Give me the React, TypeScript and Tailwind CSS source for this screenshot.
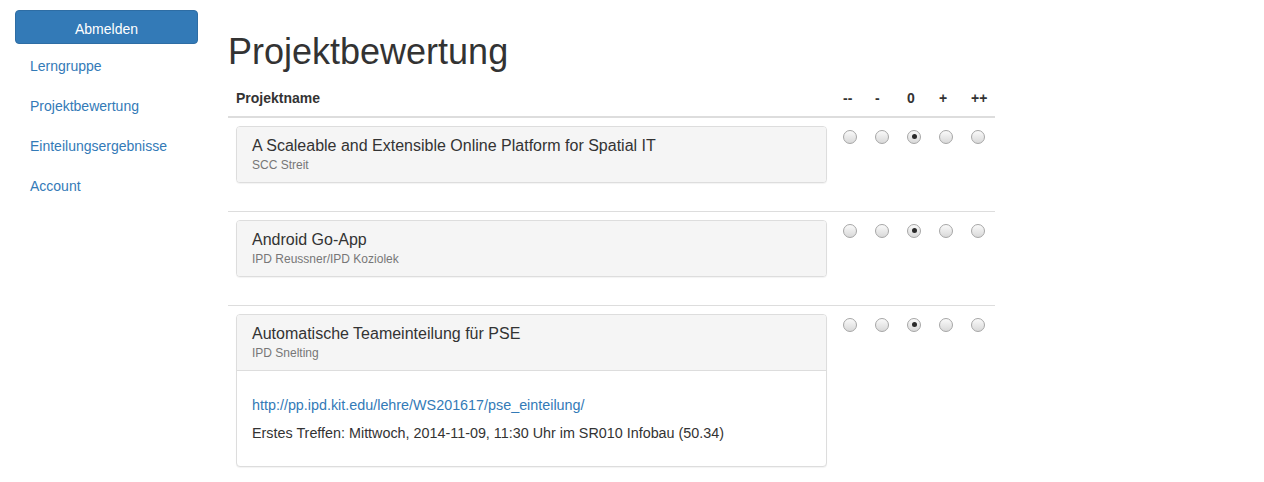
const projects = [
  {
    id: 1,
    title: 'A Scaleable and Extensible Online Platform for Spatial IT',
    supervisor: 'SCC Streit',
    details: null as null | { link: string; text: string },
  },
  {
    id: 2,
    title: 'Android Go-App',
    supervisor: 'IPD Reussner/IPD Koziolek',
    details: null as null | { link: string; text: string },
  },
  {
    id: 3,
    title: 'Automatische Teameinteilung für PSE',
    supervisor: 'IPD Snelting',
    details: {
      link: 'http://pp.ipd.kit.edu/lehre/WS201617/pse_einteilung/',
      text: 'Erstes Treffen: Mittwoch, 2014-11-09, 11:30 Uhr im SR010 Infobau (50.34)',
    },
  },
];

const ratings = ['--', '-', '0', '+', '++'];
const navLinks = ['Lerngruppe', 'Projektbewertung', 'Einteilungsergebnisse', 'Account'];

function Radio({ checked }: { checked: boolean }) {
  return (
    <span className="mt-[4px] flex h-[14px] w-[14px] items-center justify-center rounded-full border border-[#a6a6a6] bg-gradient-to-b from-[#fafafa] to-[#d9d9d9]">
      {checked && <span className="h-[5px] w-[5px] rounded-full bg-[#2a2a2a]" />}
    </span>
  );
}

export default function App() {
  return (
    <div className="min-h-screen bg-white font-['Liberation_Sans',Arial,sans-serif] text-[14px] leading-[20px] text-[#333]">
      <div className="flex pl-[15px] pt-[10px]">
        {/* Sidebar */}
        <div className="w-[183px] shrink-0">
          <button className="block h-[34px] w-full rounded-[4px] border border-[#2e6da4] bg-[#337ab7] pb-[4px] pt-[7px] text-[14px] leading-[20px] text-white">
            Abmelden
          </button>
          <ul className="mt-[2px]">
            {navLinks.map((l) => (
              <li key={l}>
                <a className="block h-[40px] px-[15px] py-[10px] text-[#337ab7]">{l}</a>
              </li>
            ))}
          </ul>
        </div>

        {/* Main */}
        <div className="ml-[30px] w-[767px] shrink-0">
          <h1 className="mb-[8px] mt-[22px] text-[36px] font-medium leading-[39.6px] text-[#333]">
            Projektbewertung
          </h1>

          <div className="flex border-b-2 border-[#ddd] font-bold">
            <div className="w-[607px] p-[8px]">Projektname</div>
            {ratings.map((r) => (
              <div key={r} className="w-[32px] p-[8px]">
                {r}
              </div>
            ))}
          </div>

          {projects.map((p, i) => (
            <div key={p.id} className={`flex ${i > 0 ? 'border-t border-[#ddd]' : ''}`}>
              <div className="w-[607px] p-[8px]">
                <div className="mb-[20px] overflow-hidden rounded-[4px] border border-[#ddd] bg-white shadow-[0_1px_1px_rgba(0,0,0,0.05)]">
                  <div className={`bg-[#f5f5f5] px-[15px] py-[10px] ${p.details ? 'border-b border-[#ddd]' : ''}`}>
                    <h3 className="text-[16px] leading-[18px] text-[#333]">{p.title}</h3>
                    <div className="pt-[3px] text-[12px] leading-[14px] text-[#777]">{p.supervisor}</div>
                  </div>
                  {p.details && (
                    <div className="flex flex-col gap-[8px] px-[15px] pb-[23px] pt-[24px] text-[14.35px]">
                      <a className="text-[#337ab7]">{p.details.link}</a>
                      <p>{p.details.text}</p>
                    </div>
                  )}
                </div>
              </div>
              {ratings.map((r) => (
                <div key={r} className="w-[32px] p-[8px]">
                  <Radio checked={r === '0'} />
                </div>
              ))}
            </div>
          ))}
        </div>
      </div>
    </div>
  );
}
